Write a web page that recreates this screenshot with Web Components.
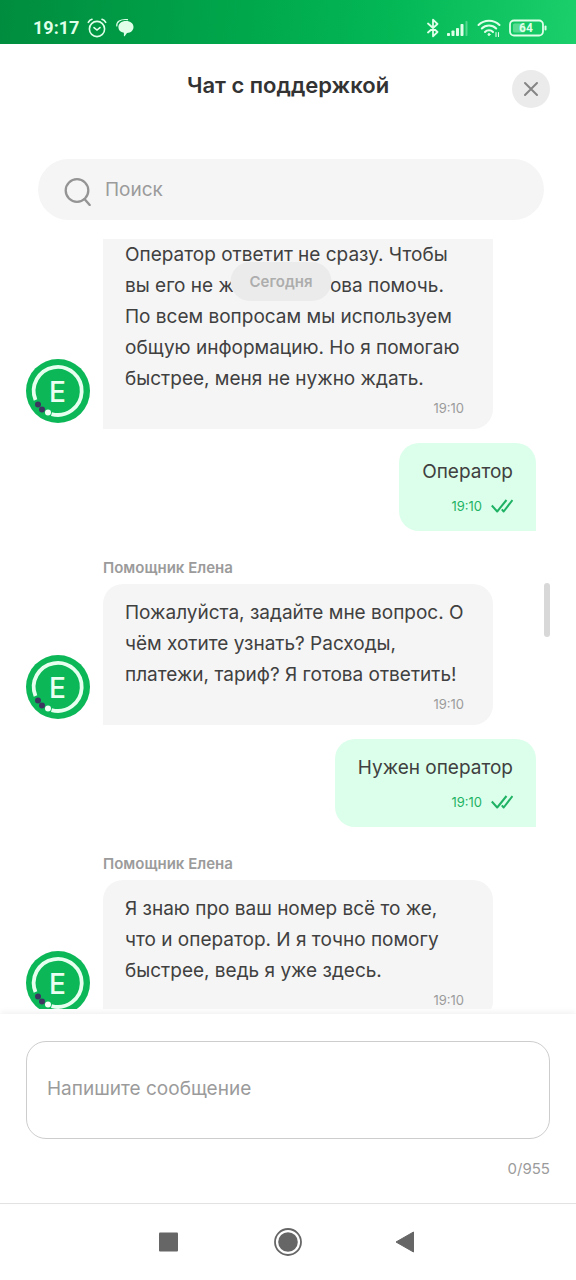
<!DOCTYPE html>
<html lang="ru">
<head>
<meta charset="utf-8">
<meta name="viewport" content="width=device-width, initial-scale=1">
<title>Чат с поддержкой</title>
<style>
  html, body { height: 100%; margin: 0; }
  body {
    background: #fff;
    color: #404040;
    font-family: Inter, "Noto Sans", sans-serif;
    --green: #0cb758;
    --bubble: #f5f5f5;
    --bubble-own: #dcffeb;
    --muted: #9b9b9b;
  }
  .gap { display: inline-block; width: 96px; }
</style>
</head>
<body>
<support-chat>
  <chat-message avatar="Е" time="19:10" cut>Оператор ответит не сразу. Чтобы<br>вы его не ж<span class="gap"></span>ова помочь.<br>По всем вопросам мы используем<br>общую информацию. Но я помогаю<br>быстрее, меня не нужно ждать.</chat-message>
  <chat-message own time="19:10">Оператор</chat-message>
  <chat-message avatar="Е" name="Помощник Елена" time="19:10">Пожалуйста, задайте мне вопрос. О<br>чём хотите узнать? Расходы,<br>платежи, тариф? Я готова ответить!</chat-message>
  <chat-message own time="19:10">Нужен оператор</chat-message>
  <chat-message avatar="Е" name="Помощник Елена" time="19:10">Я знаю про ваш номер всё то же,<br>что и оператор. И я точно помогу<br>быстрее, ведь я уже здесь.</chat-message>
</support-chat>

<script>
class StatusBar extends HTMLElement {
  constructor() {
    super();
    this.attachShadow({ mode: 'open' });
  }

  connectedCallback() {
    this.shadowRoot.innerHTML = `
      <style>
        :host {
          display: flex;
          align-items: center;
          gap: 8px;
          height: 44px;
          padding: 12px 29px 0 33px;
          box-sizing: border-box;
          flex: none;
          color: #dfffe9;
          background: linear-gradient(95deg, #008c3e 0%, #00a94c 45%, #04b957 70%, #1bd06b 100%);
          font-family: Roboto, sans-serif;
        }
        .time { font-size: 18px; line-height: 24px; font-weight: 700; }
        .spacer { flex: 1; }
        svg { display: block; flex: none; }
        .battery { font: 700 12px Roboto, sans-serif; }
      </style>
      <span class="time">19:17</span>
      <svg width="20" height="20" viewBox="0 0 20 20" fill="none" stroke="currentColor" stroke-width="1.600" stroke-linecap="round">
        <circle cx="10" cy="11" r="7.600"/>
        <path d="M7 9.600 10 12l3-2.400M1.300 4.400C2 3 3.400 1.800 5 1.300M18.700 4.400C18 3 16.600 1.800 15 1.300"/>
      </svg>
      <svg width="20" height="20" viewBox="0 0 20 20">
        <path fill="currentColor" d="M11 3c4.400 0 7.500 2.500 7.500 6s-2.600 5.700-6.500 6.100L9.800 18c-.4.500-.9.300-.9-.3v-3C5.500 14.200 3.400 12.100 3.400 9.200 3.400 5.600 6.400 3 11 3z"/>
        <path fill="none" stroke="currentColor" stroke-width="1.200" stroke-linecap="round" d="M1.800 8C1.200 3.800 5.200.900 12.500 1.600"/>
      </svg>
      <span class="spacer"></span>
      <svg width="12" height="20" viewBox="0 0 12 20" fill="none" stroke="currentColor" stroke-width="1.800" stroke-linejoin="round" stroke-linecap="round">
        <path d="M1 5.500 10.500 14 6 18.300V1.700L10.500 6 1 14.500"/>
      </svg>
      <svg width="22" height="18" viewBox="0 0 22 18" fill="currentColor">
        <rect x="0" y="14" width="3" height="3" rx=".8"/>
        <rect x="4.500" y="11.500" width="3" height="5.500" rx=".8"/>
        <rect x="9" y="9" width="3" height="8" rx=".8"/>
        <rect x="13.500" y="5" width="3" height="12" rx=".8"/>
        <rect x="18.500" y="2" width="2" height="15" rx=".8" opacity=".35"/>
      </svg>
      <svg width="24" height="20" viewBox="0 0 24 20" fill="none" stroke="currentColor" stroke-width="2" stroke-linecap="round">
        <path d="M1.500 7c5.700-5.800 15.300-5.800 21 0M4.800 10.500c4-4 10.400-4 14.400 0M8 14c2-2.200 6-2.200 8 0"/>
        <circle cx="12" cy="16.500" r="1" fill="currentColor" stroke-width="1"/>
        <path stroke-width="1.100" d="M19 14.500v4M21.500 14.500v4"/>
      </svg>
      <svg class="battery" width="38" height="18" viewBox="0 0 38 18">
        <rect x="1" y="1.500" width="33" height="15" rx="4" fill="none" stroke="currentColor" stroke-width="1.800"/>
        <rect x="4" y="4.500" width="12" height="9" rx="1.500" fill="currentColor" opacity=".35"/>
        <path stroke="currentColor" stroke-width="2" stroke-linecap="round" d="M36.500 7.500v3"/>
        <text x="17" y="13" text-anchor="middle" fill="currentColor">64</text>
      </svg>
    `;
  }
}
customElements.define('status-bar', StatusBar);

class ChatHeader extends HTMLElement {
  constructor() {
    super();
    this.attachShadow({ mode: 'open' });
  }

  connectedCallback() {
    this.shadowRoot.innerHTML = `
      <style>
        :host {
          display: grid;
          grid-template-columns: 38px 1fr 38px;
          align-items: start;
          padding: 26px 26px 0;
          flex: none;
        }
        h1 {
          grid-column: 2;
          margin: 0;
          font-size: 22px;
          line-height: 31px;
          font-weight: 600;
          text-align: center;
          color: #333;
        }
        button {
          display: grid;
          place-items: center;
          width: 38px;
          height: 38px;
          padding: 0;
          border: 0;
          border-radius: 50%;
          background: #ebebeb;
          color: #858585;
        }
      </style>
      <h1><slot></slot></h1>
      <button type="button" aria-label="Закрыть">
        <svg width="16" height="16" viewBox="0 0 16 16" fill="none" stroke="currentColor" stroke-width="2" stroke-linecap="round"><path d="m2 2 12 12M14 2 2 14"/></svg>
      </button>
    `;
  }
}
customElements.define('chat-header', ChatHeader);

class ChatSearch extends HTMLElement {
  constructor() {
    super();
    this.attachShadow({ mode: 'open' });
  }

  connectedCallback() {
    this.shadowRoot.innerHTML = `
      <style>
        :host { display: block; flex: none; padding: 51px 32px 19px 38px; }
        label {
          display: flex;
          align-items: center;
          gap: 13px;
          height: 61px;
          padding: 0 26px;
          border-radius: 31px;
          background: var(--bubble);
          color: #949494;
        }
        input {
          flex: 1;
          min-width: 0;
          padding: 0;
          border: 0;
          outline: 0;
          background: none;
          font: 19px/31px Inter, "Noto Sans", sans-serif;
          color: #404040;
        }
        input::placeholder { color: var(--muted); opacity: 1; }
        svg { flex: none; }
      </style>
      <label>
        <svg width="28" height="32" viewBox="0 0 28 32" fill="none" stroke="currentColor" stroke-width="2.300" stroke-linecap="round">
          <circle cx="13" cy="16.500" r="11.300"/><path d="m20.500 25 5.200 6"/>
        </svg>
        <input type="text" placeholder="Поиск" aria-label="Поиск">
      </label>
    `;
  }
}
customElements.define('chat-search', ChatSearch);

class ChatAvatar extends HTMLElement {
  constructor() {
    super();
    this.attachShadow({ mode: 'open' });
  }

  connectedCallback() {
    this.shadowRoot.innerHTML = `
      <style>
        :host { display: block; width: 64px; height: 64px; flex: none; }
        svg { display: block; }
        text { font: 500 28px Inter, "Noto Sans", sans-serif; }
      </style>
      <svg width="64" height="64" viewBox="0 0 64 64">
        <circle cx="32" cy="32" r="32" fill="var(--green)"/>
        <path d="M9.500 41A24 24 0 1 1 25.500 55.100" fill="none" stroke="#e6ffef" stroke-width="3.800"/>
        <circle cx="12" cy="45.500" r="3" fill="#3b3560"/>
        <circle cx="16" cy="50.500" r="3" fill="#3b3560"/>
        <circle cx="22" cy="53.500" r="3" fill="#f2fff6"/>
        <text x="31.500" y="43" text-anchor="middle" fill="#eafff1">${this.getAttribute('letter')}</text>
      </svg>
    `;
  }
}
customElements.define('chat-avatar', ChatAvatar);

class ChatMessage extends HTMLElement {
  constructor() {
    super();
    this.attachShadow({ mode: 'open' });
  }

  connectedCallback() {
    const own = this.hasAttribute('own');
    const name = this.getAttribute('name');
    const ticks = `
      <svg width="22" height="14" viewBox="0 0 22 14" fill="none" stroke="currentColor" stroke-width="2" stroke-linejoin="round">
        <path d="m.8 6.500 5.400 6L15.500 1M10.800 10.300l1.900 2.200L21.500 1"/>
      </svg>`;

    this.shadowRoot.innerHTML = `
      <style>
        :host { display: flex; align-items: flex-end; gap: 13px; flex: none; }
        :host([own]) { justify-content: flex-end; }
        .body { flex: 1; margin-right: 43px; min-width: 0; }
        :host([own]) .body { flex: none; margin-right: 0; }
        chat-avatar { margin-bottom: 6px; }
        .name {
          padding: 12px 0 5px;
          font-size: 15px;
          line-height: 22px;
          font-weight: 600;
          color: var(--muted);
        }
        .bubble {
          padding: 13px 29px 11px 22px;
          border-radius: 20px 20px 20px 0;
          background: var(--bubble);
        }
        :host([cut]) .bubble { padding-top: 0; border-top-left-radius: 0; border-top-right-radius: 0; }
        :host([own]) .bubble {
          padding: 13px 23px 15px;
          border-radius: 20px 20px 0 20px;
          background: var(--bubble-own);
        }
        .text { font-size: 19px; line-height: 31px; white-space: nowrap; }
        .meta {
          display: flex;
          align-items: center;
          justify-content: flex-end;
          gap: 9px;
          margin-top: 4px;
          font-size: 13px;
          line-height: 20px;
          color: var(--muted);
        }
        :host([own]) .meta { margin-top: 9px; color: #1fb264; }
      </style>
      ${own ? '' : `<chat-avatar letter="${this.getAttribute('avatar')}"></chat-avatar>`}
      <div class="body">
        ${name ? `<div class="name">${name}</div>` : ''}
        <div class="bubble">
          <div class="text"><slot></slot></div>
          <div class="meta"><time>${this.getAttribute('time')}</time>${own ? ticks : ''}</div>
        </div>
      </div>
    `;
  }
}
customElements.define('chat-message', ChatMessage);

class ChatComposer extends HTMLElement {
  constructor() {
    super();
    this.attachShadow({ mode: 'open' });
  }

  connectedCallback() {
    this.shadowRoot.innerHTML = `
      <style>
        :host {
          display: flex;
          flex-direction: column;
          flex: none;
          margin-top: 5px;
          padding: 27px 26px 22px;
          background: #fff;
          box-shadow: 0 -2px 6px rgba(0, 0, 0, 0.06);
        }
        textarea {
          display: block;
          box-sizing: border-box;
          width: 100%;
          height: 98px;
          padding: 31px 20px;
          border: 1px solid #cdcdcd;
          border-radius: 20px;
          outline: 0;
          resize: none;
          font: 19px/31px Inter, "Noto Sans", sans-serif;
          color: #404040;
          overflow: hidden;
        }
        textarea::placeholder { color: var(--muted); opacity: 1; }
        .count {
          margin-top: 18px;
          font-size: 15px;
          line-height: 24px;
          text-align: right;
          color: var(--muted);
        }
      </style>
      <textarea maxlength="955" placeholder="Напишите сообщение" aria-label="Напишите сообщение"></textarea>
      <div class="count">0/955</div>
    `;

    const area = this.shadowRoot.querySelector('textarea');
    const count = this.shadowRoot.querySelector('.count');
    area.addEventListener('input', () => {
      count.textContent = `${area.value.length}/955`;
    });
  }
}
customElements.define('chat-composer', ChatComposer);

class NavBar extends HTMLElement {
  constructor() {
    super();
    this.attachShadow({ mode: 'open' });
  }

  connectedCallback() {
    this.shadowRoot.innerHTML = `
      <style>
        :host {
          display: flex;
          align-items: center;
          justify-content: center;
          gap: 90px;
          height: 77px;
          box-sizing: border-box;
          border-top: 1px solid #e2e2e2;
          flex: none;
        }
        button {
          display: grid;
          place-items: center;
          width: 28px;
          height: 28px;
          padding: 0;
          border: 0;
          background: none;
          color: #666;
        }
      </style>
      <button type="button" aria-label="Недавние"><svg width="28" height="28" viewBox="0 0 28 28"><rect x="3" y="4.500" width="19" height="19" rx="1" fill="currentColor"/></svg></button>
      <button type="button" aria-label="Домой"><svg width="28" height="28" viewBox="0 0 28 28"><circle cx="14" cy="14" r="13" fill="none" stroke="currentColor" stroke-width="1.800"/><circle cx="14" cy="14" r="9.800" fill="currentColor"/></svg></button>
      <button type="button" aria-label="Назад"><svg width="28" height="28" viewBox="0 0 28 28"><path fill="currentColor" stroke="currentColor" stroke-linejoin="round" d="M21.500 4v20L4 14z"/></svg></button>
    `;
  }
}
customElements.define('nav-bar', NavBar);

class SupportChat extends HTMLElement {
  constructor() {
    super();
    this.attachShadow({ mode: 'open' });
  }

  connectedCallback() {
    this.shadowRoot.innerHTML = `
      <style>
        :host { display: flex; flex-direction: column; height: 100%; }
        .chat { position: relative; flex: 1; min-height: 0; }
        .list {
          display: flex;
          flex-direction: column;
          gap: 14px;
          height: 100%;
          box-sizing: border-box;
          padding: 0 40px 0 26px;
          overflow-y: auto;
          scrollbar-width: none;
        }
        .day {
          position: absolute;
          top: 23px;
          left: 50%;
          transform: translateX(-50%);
          margin-left: -7px;
          padding: 0 19px;
          border-radius: 20px;
          background: #ebebeb;
          color: #adadad;
          font-size: 15px;
          line-height: 39px;
          font-weight: 600;
        }
        .thumb {
          position: absolute;
          top: 344px;
          right: 26px;
          width: 6px;
          height: 54px;
          border-radius: 3px;
          background: #d8d8d8;
        }
      </style>
      <status-bar></status-bar>
      <chat-header>Чат с поддержкой</chat-header>
      <chat-search></chat-search>
      <div class="chat">
        <div class="list"><slot></slot></div>
        <div class="day">Сегодня</div>
        <div class="thumb"></div>
      </div>
      <chat-composer></chat-composer>
      <nav-bar></nav-bar>
    `;
  }
}
customElements.define('support-chat', SupportChat);
</script>
</body>
</html>
